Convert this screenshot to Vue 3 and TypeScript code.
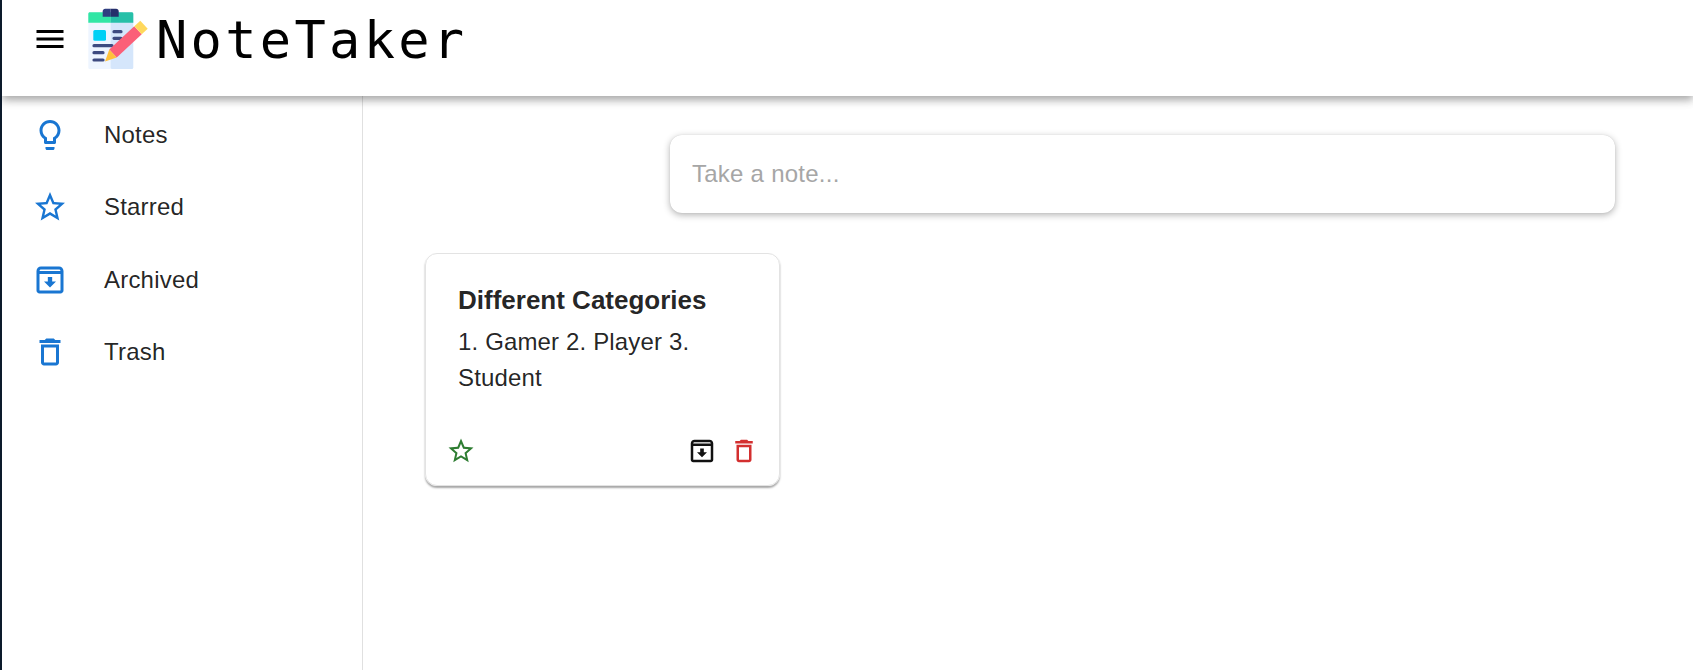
<template>
  <div class="page">
    <header class="top-bar">
      <button class="menu-btn" aria-label="menu">
        <svg class="icon-lg" viewBox="0 0 24 24"><path :d="icons.menu" /></svg>
      </button>
      <svg class="logo" width="64" height="64" viewBox="0 0 64 64">
        <rect x="2.3" y="4.3" width="23" height="56.7" rx="1.5" fill="#eef5ff" />
        <rect x="24.7" y="4.3" width="22.6" height="56.7" rx="1.5" fill="#d5e6fb" />
        <path d="M2.3 14.7V5.8c0-.8.7-1.5 1.5-1.5h21v10.4z" fill="#31e6a5" />
        <path d="M24.7 4.3h21c.9 0 1.6.7 1.6 1.5v8.9H24.7z" fill="#26c0a8" />
        <path d="M24.7.7h-5.5c-1.4 0-2.5 1.1-2.5 2.5v5.5h8z" fill="#2f3d80" />
        <path d="M24.7.7h5.5c1.4 0 2.5 1.1 2.5 2.5v5.5h-8z" fill="#252f6b" />
        <rect x="7.3" y="22" width="12.7" height="10.7" rx="1.5" fill="#00d0f5" />
        <g stroke="#3d4a80" stroke-width="3.2" stroke-linecap="round">
          <path d="M28 23.7h7M28 30.3h7M8 37.7h18M8 44.7h9M8 52h9" />
        </g>
        <path d="M27 45.5 52 22.3" stroke="#fb5f78" stroke-width="11" />
        <path d="M52 22.3 58 16.8" stroke="#ffd85c" stroke-width="11" />
        <path d="M19 53.5 23.3 41.5 30.7 49.5z" fill="#ffc13b" />
      </svg>
      <span class="brand">NoteTaker</span>
    </header>

    <div class="body-row">
      <nav class="side-nav">
        <a v-for="item in navItems" :key="item.label" class="nav-item">
          <svg class="icon-lg nav-icon" viewBox="0 0 24 24"><path :d="item.icon" /></svg>
          <span>{{ item.label }}</span>
        </a>
      </nav>

      <main class="content">
        <input class="note-input" type="text" placeholder="Take a note..." />

        <article class="note-card">
          <div class="note-body">
            <h3>Different Categories</h3>
            <p>1. Gamer 2. Player 3. Student</p>
          </div>
          <div class="note-actions">
            <button class="act green"><svg viewBox="0 0 24 24"><path :d="icons.star" /></svg></button>
            <span class="spacer"></span>
            <button class="act dark"><svg viewBox="0 0 24 24"><path :d="icons.archive" /></svg></button>
            <button class="act red"><svg viewBox="0 0 24 24"><path :d="icons.trash" /></svg></button>
          </div>
        </article>
      </main>
    </div>
  </div>
</template>

<script setup lang="ts">
const icons = {
  menu: 'M3 18h18v-2H3v2zm0-5h18v-2H3v2zm0-7v2h18V6H3z',
  bulb: 'M9 21c0 .55.45 1 1 1h4c.55 0 1-.45 1-1v-1H9v1zm3-19C8.14 2 5 5.14 5 9c0 2.38 1.19 4.47 3 5.74V17c0 .55.45 1 1 1h6c.55 0 1-.45 1-1v-2.26c1.81-1.27 3-3.36 3-5.74 0-3.86-3.14-7-7-7zm2.85 11.1l-.85.6V16h-4v-2.3l-.85-.6C7.8 12.16 7 10.63 7 9c0-2.76 2.24-5 5-5s5 2.24 5 5c0 1.63-.8 3.16-2.15 4.1z',
  star: 'M22 9.24l-7.19-.62L12 2 9.19 8.63 2 9.24l5.46 4.73L5.82 21 12 17.27 18.18 21l-1.63-7.03L22 9.24zM12 15.4l-3.76 2.27 1-4.28-3.32-2.88 4.38-.38L12 6.1l1.71 4.04 4.38.38-3.32 2.88 1 4.28L12 15.4z',
  archive: 'M18 3H6C4.35 3 3 4.35 3 6v13c0 1.1.9 2 2 2h14c1.1 0 2-.9 2-2V6c0-1.65-1.35-3-3-3zM6 5h12c.55 0 1 .45 1 1H5c0-.55.45-1 1-1zM5 19V8h14v11H5zm8.45-9h-2.9v3H8l4 4 4-4h-2.55z',
  trash: 'M6 19c0 1.1.9 2 2 2h8c1.1 0 2-.9 2-2V7H6v12zM8 9h8v10H8V9zm7.5-5l-1-1h-5l-1 1H5v2h14V4z'
};

const navItems = [
  { label: 'Notes', icon: icons.bulb },
  { label: 'Starred', icon: icons.star },
  { label: 'Archived', icon: icons.archive },
  { label: 'Trash', icon: icons.trash }
];
</script>

<style>
body {
  margin: 0;
  background: #fff;
}
</style>

<style scoped>
.page {
  height: 670px;
  border-left: 2px solid #0c1a2b;
  display: flex;
  flex-direction: column;
  overflow: hidden;
  font-family: "Liberation Sans", Arial, sans-serif;
  color: rgba(0, 0, 0, 0.87);
  background: #fff;
}

.top-bar {
  height: 96px;
  flex-shrink: 0;
  display: flex;
  align-items: flex-start;
  padding-left: 30px;
  background: #fff;
  box-shadow: 0 4px 8px rgba(0, 0, 0, 0.3), 0 1px 14px rgba(0, 0, 0, 0.1);
  position: relative;
  z-index: 2;
}

.menu-btn {
  width: 36px;
  height: 36px;
  margin-top: 21px;
  padding: 0;
  border: 0;
  background: none;
  color: #000;
}

.icon-lg {
  display: block;
  width: 36px;
  height: 36px;
  fill: currentColor;
}

.logo {
  margin: 8px 0 0 18px;
  flex-shrink: 0;
}

.brand {
  margin: 9px 0 0 6px;
  font-family: "DejaVu Sans Mono", monospace;
  font-size: 52px;
  line-height: 62px;
  letter-spacing: 3.3px;
  color: #000;
}

.body-row {
  flex: 1;
  display: flex;
  min-height: 0;
}

.side-nav {
  width: 360px;
  flex-shrink: 0;
  border-right: 1px solid #e0e0e0;
  padding-top: 3px;
}

.nav-item {
  height: 72.3px;
  display: flex;
  align-items: center;
  gap: 36px;
  padding-left: 30px;
  font-size: 24px;
  letter-spacing: 0.2px;
}

.nav-icon {
  color: #1976d2;
}

.content {
  flex: 1;
  padding: 39px 0 0 62px;
}

.note-input {
  display: block;
  box-sizing: border-box;
  width: 945px;
  height: 78px;
  margin-left: 245px;
  padding: 0 22px;
  border: 0;
  border-radius: 12px;
  outline: none;
  background: #fff;
  box-shadow: 0 2px 7px rgba(0, 0, 0, 0.3), 0 0 1px rgba(0, 0, 0, 0.15);
  font-family: inherit;
  font-size: 24px;
  letter-spacing: 0.25px;
}

.note-input::placeholder {
  color: #a6a6a6;
  opacity: 1;
}

.note-card {
  box-sizing: border-box;
  width: 355px;
  height: 233px;
  margin-top: 40px;
  border-radius: 12px;
  border: 1px solid #e3e3e3;
  box-shadow: 0 2px 2px rgba(0, 0, 0, 0.35);
  display: flex;
  flex-direction: column;
}

.note-body {
  flex: 1;
  padding: 28px 30px 0 32px;
}

.note-body h3 {
  margin: 0;
  font-size: 26px;
  line-height: 36px;
  font-weight: 700;
}

.note-body p {
  margin: 6px 0 0;
  font-size: 24px;
  line-height: 36px;
  letter-spacing: 0.15px;
}

.note-actions {
  display: flex;
  padding: 0 14px 13px 14px;
}

.spacer {
  flex: 1;
}

.act {
  width: 42px;
  height: 42px;
  padding: 6px;
  border: 0;
  background: none;
}

.act svg {
  display: block;
  width: 30px;
  height: 30px;
  fill: currentColor;
}

.green {
  color: #2e7d32;
}

.dark {
  color: #111;
}

.red {
  color: #d32f2f;
}
</style>
